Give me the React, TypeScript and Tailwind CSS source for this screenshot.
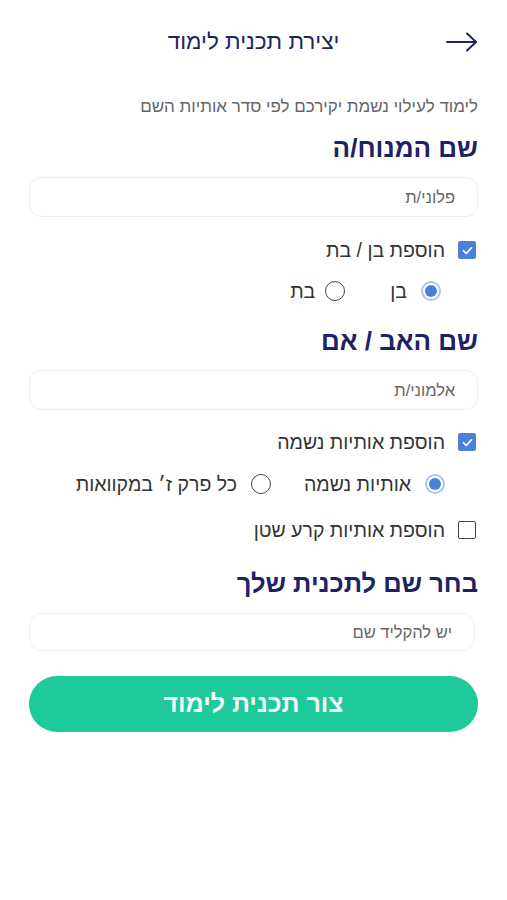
import { useState } from "react";

function ArrowRight() {
  return (
    <svg width="32" height="20" viewBox="0 0 32 20" fill="none" stroke="#1f2460" strokeWidth="2" strokeLinecap="round" strokeLinejoin="round">
      <path d="M1 10h29" />
      <path d="M21 1.5l9 8.5-9 8.5" />
    </svg>
  );
}

function Checkbox({ checked, label }: { checked: boolean; label: string }) {
  return (
    <div className="flex items-center h-[24px] gap-[13px] pr-[2px]">
      {checked ? (
        <span className="shrink-0 w-[18px] h-[18px] rounded-[2px] bg-[#4a80da] flex items-center justify-center">
          <svg width="11" height="9" viewBox="0 0 11 9" fill="none" stroke="#fff" strokeWidth="1.6" strokeLinecap="round" strokeLinejoin="round">
            <path d="M1.5 4.8l2.8 2.6L9.5 1.8" />
          </svg>
        </span>
      ) : (
        <span className="shrink-0 block w-[18px] h-[18px] rounded-[2px] border-[1.5px] border-[#444] bg-white" />
      )}
      <span className="text-[19.5px] leading-[24px] text-[#333]">{label}</span>
    </div>
  );
}

function RadioDot({ checked, className = "" }: { checked: boolean; className?: string }) {
  return checked ? (
    <span className={"shrink-0 w-[20px] h-[20px] rounded-full border-2 border-[#a9c4f2] flex items-center justify-center " + className}>
      <span className="block w-[12px] h-[12px] rounded-full bg-[#4a80da]" />
    </span>
  ) : (
    <span className={"shrink-0 block w-[20px] h-[20px] rounded-full border-[1.5px] border-[#444] " + className} />
  );
}

function TextInput({ placeholder, className = "" }: { placeholder: string; className?: string }) {
  return (
    <input
      placeholder={placeholder}
      className={
        "w-full rounded-[12px] border border-[#eceef2] bg-white px-[22px] text-[16.5px] text-[#333] placeholder:text-[#666] outline-none " +
        className
      }
    />
  );
}

export default function App() {
  const [child, setChild] = useState("son");
  return (
    <div
      dir="rtl"
      className="min-h-[900px] w-full bg-white px-[29px] pt-[28px]"
      style={{ fontFamily: '"Liberation Sans", Arial, sans-serif' }}
    >
      {/* Header */}
      <div className="flex items-center h-[28px]">
        <div className="w-[32px] flex justify-start">
          <ArrowRight />
        </div>
        <div className="flex-1 text-center text-[22.5px] leading-[28px] text-[#1f2460]">יצירת תכנית לימוד</div>
        <div className="w-[32px]" />
      </div>

      <p className="mt-[41px] h-[20px] leading-[20px] text-[17px] text-[#666]">
        לימוד לעילוי נשמת יקירכם לפי סדר אותיות השם
      </p>

      <h2 className="mt-[17px] h-[28px] leading-[28px] text-[26px] font-bold text-[#1c2266]">שם המנוח/ה</h2>
      <TextInput placeholder="פלוני/ת" className="mt-[15px] h-[40px]" />

      <div className="mt-[21px]">
        <Checkbox checked label="הוספת בן / בת" />
      </div>
      <div className="mt-[17px] h-[24px] flex items-center pr-[37px]" onClick={() => setChild(child === "son" ? "daughter" : "son")}>
        <RadioDot checked={child === "son"} />
        <span className="mr-[14px] text-[19.5px] leading-[24px] text-[#333]">בן</span>
        <RadioDot checked={child === "daughter"} className="mr-[45px]" />
        <span className="mr-[10px] text-[19.5px] leading-[24px] text-[#333]">בת</span>
      </div>

      <h2 className="mt-[24px] h-[28px] leading-[28px] text-[26px] font-bold text-[#1c2266]">שם האב / אם</h2>
      <TextInput placeholder="אלמוני/ת" className="mt-[15px] h-[40px]" />

      <div className="mt-[20px]">
        <Checkbox checked label="הוספת אותיות נשמה" />
      </div>
      <div className="mt-[18px] h-[24px] flex items-center pr-[33px]">
        <RadioDot checked />
        <span className="mr-[14px] text-[19.5px] leading-[24px] text-[#333]">אותיות נשמה</span>
        <RadioDot checked={false} className="mr-[33px]" />
        <span className="mr-[14px] text-[19.5px] leading-[24px] text-[#333]">כל פרק ז׳ במקוואות</span>
      </div>

      <div className="mt-[22px]">
        <Checkbox checked={false} label="הוספת אותיות קרע שטן" />
      </div>

      <h2 className="mt-[27px] h-[28px] leading-[28px] text-[25.5px] font-bold text-[#1c2266]">בחר שם לתכנית שלך</h2>
      <div className="mt-[16px] pr-[3px]">
        <TextInput placeholder="יש להקליד שם" className="h-[38px]" />
      </div>

      <button className="mt-[25px] w-full h-[56px] rounded-full bg-[#1ec99a] text-[#f4f6fb] text-[25px] font-bold">
        צור תכנית לימוד
      </button>
    </div>
  );
}
